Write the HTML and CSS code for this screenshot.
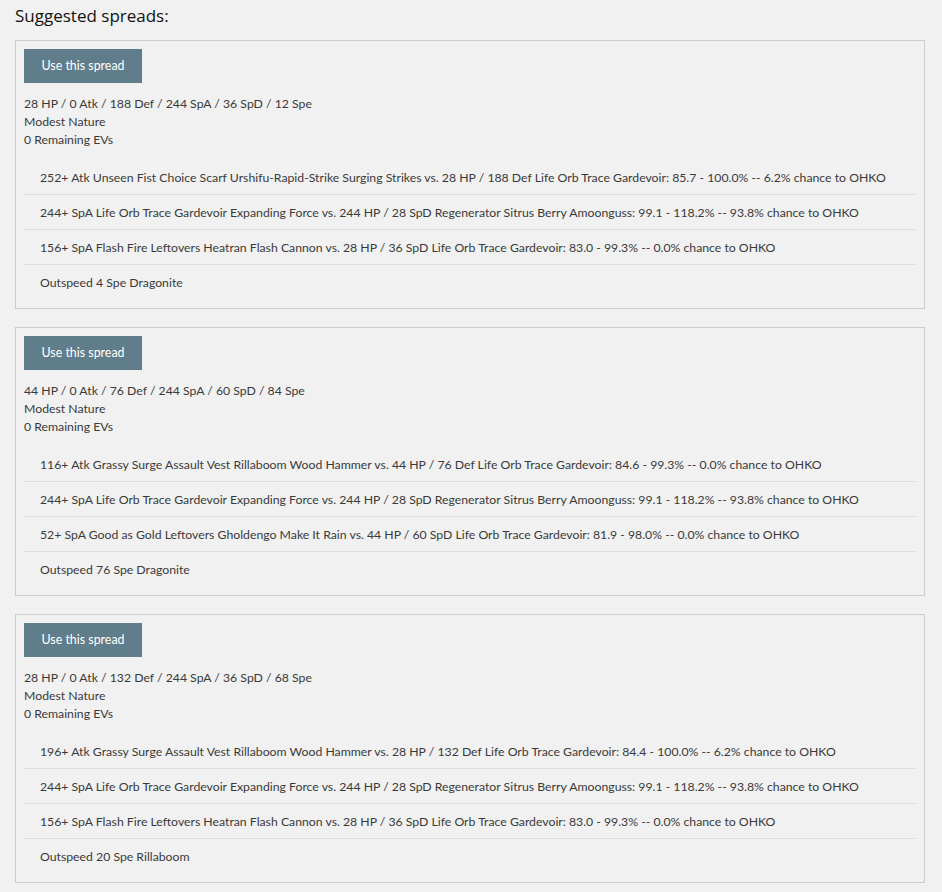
FILE: index.html
```html
<!DOCTYPE html>
<html>
<head>
<meta charset="utf-8">
<link rel="stylesheet" href="styles.css">
</head>
<body>
<div class="page">
  <h3 class="title">Suggested spreads:</h3>

  <div class="card">
    <button class="use-btn">Use this spread</button>
    <div class="stats">
      <div>28 HP / 0 Atk / 188 Def / 244 SpA / 36 SpD / 12 Spe</div>
      <div>Modest Nature</div>
      <div>0 Remaining EVs</div>
    </div>
    <ul class="calcs">
      <li>252+ Atk Unseen Fist Choice Scarf Urshifu-Rapid-Strike Surging Strikes vs. 28 HP / 188 Def Life Orb Trace Gardevoir: 85.7 - 100.0% -- 6.2% chance to OHKO</li>
      <li>244+ SpA Life Orb Trace Gardevoir Expanding Force vs. 244 HP / 28 SpD Regenerator Sitrus Berry Amoonguss: 99.1 - 118.2% -- 93.8% chance to OHKO</li>
      <li>156+ SpA Flash Fire Leftovers Heatran Flash Cannon vs. 28 HP / 36 SpD Life Orb Trace Gardevoir: 83.0 - 99.3% -- 0.0% chance to OHKO</li>
      <li>Outspeed 4 Spe Dragonite</li>
    </ul>
  </div>

  <div class="card">
    <button class="use-btn">Use this spread</button>
    <div class="stats">
      <div>44 HP / 0 Atk / 76 Def / 244 SpA / 60 SpD / 84 Spe</div>
      <div>Modest Nature</div>
      <div>0 Remaining EVs</div>
    </div>
    <ul class="calcs">
      <li>116+ Atk Grassy Surge Assault Vest Rillaboom Wood Hammer vs. 44 HP / 76 Def Life Orb Trace Gardevoir: 84.6 - 99.3% -- 0.0% chance to OHKO</li>
      <li>244+ SpA Life Orb Trace Gardevoir Expanding Force vs. 244 HP / 28 SpD Regenerator Sitrus Berry Amoonguss: 99.1 - 118.2% -- 93.8% chance to OHKO</li>
      <li>52+ SpA Good as Gold Leftovers Gholdengo Make It Rain vs. 44 HP / 60 SpD Life Orb Trace Gardevoir: 81.9 - 98.0% -- 0.0% chance to OHKO</li>
      <li>Outspeed 76 Spe Dragonite</li>
    </ul>
  </div>

  <div class="card">
    <button class="use-btn">Use this spread</button>
    <div class="stats">
      <div>28 HP / 0 Atk / 132 Def / 244 SpA / 36 SpD / 68 Spe</div>
      <div>Modest Nature</div>
      <div>0 Remaining EVs</div>
    </div>
    <ul class="calcs">
      <li>196+ Atk Grassy Surge Assault Vest Rillaboom Wood Hammer vs. 28 HP / 132 Def Life Orb Trace Gardevoir: 84.4 - 100.0% -- 6.2% chance to OHKO</li>
      <li>244+ SpA Life Orb Trace Gardevoir Expanding Force vs. 244 HP / 28 SpD Regenerator Sitrus Berry Amoonguss: 99.1 - 118.2% -- 93.8% chance to OHKO</li>
      <li>156+ SpA Flash Fire Leftovers Heatran Flash Cannon vs. 28 HP / 36 SpD Life Orb Trace Gardevoir: 83.0 - 99.3% -- 0.0% chance to OHKO</li>
      <li>Outspeed 20 Spe Rillaboom</li>
    </ul>
  </div>
</div>
</body>
</html>
```

FILE: styles.css
```css
html, body {
  margin: 0;
  padding: 0;
  background: #f1f1f1;
}
body {
  font-family: Lato, "Liberation Sans", sans-serif;
  color: #3a3a3a;
  font-size: 12.25px;
}
.page {
  padding: 0 17px 0 15px;
}
.title {
  margin: 0;
  padding-top: 4px;
  height: 36px;
  font-family: "Open Sans", "Liberation Sans", sans-serif;
  font-weight: 400;
  font-size: 17px;
  line-height: 24px;
  color: #111;
}
.card {
  border: 1px solid #cccccc;
  padding: 8px 8px 9px 8px;
  margin-bottom: 18px;
}
.use-btn {
  display: block;
  width: 118px;
  height: 34px;
  border: none;
  background: #607d8b;
  color: #fff;
  font-family: Lato, "Liberation Sans", sans-serif;
  font-size: 12.4px;
  padding: 0 0 1px 0;
  margin: 0 0 12px 0;
}
.stats {
  line-height: 18px;
}
.calcs {
  list-style: none;
  margin: 11px 0 0 0;
  padding: 0;
}
.calcs li {
  padding: 9px 16px 7px 16px;
  line-height: 18px;
  border-bottom: 1px solid #dddddd;
  white-space: nowrap;
}
.calcs li:last-child {
  border-bottom: none;
}
```
